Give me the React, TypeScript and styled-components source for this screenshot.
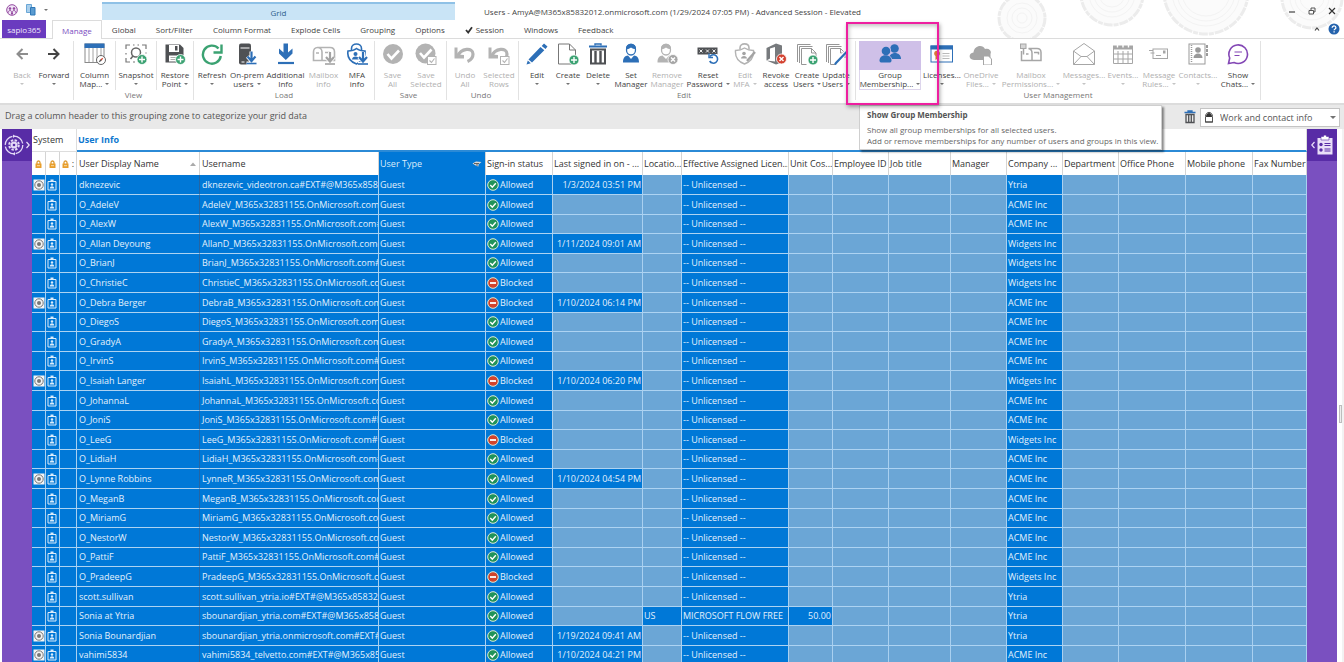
import React from "react";
import styled, { createGlobalStyle, css } from "styled-components";

const Global = createGlobalStyle`
  * { box-sizing: border-box; }
  html, body { margin: 0; height: 100%; background: #fff; }
  body, button, select, table {
    font-family: "Open Sans", "Noto Sans", sans-serif;
    font-size: 9px;
    color: #444;
  }
  button { border: 0; background: none; padding: 0; margin: 0; cursor: default; }
  svg { display: block; flex: none; }
`;

const GRAY = "#b3b3b3";
const DARK = "#4f5154";
const BLUE = "#2d6fb7";
const GREEN = "#3ba272";
const PURPLE = "#8347b5";

/* ---------- window frame ---------- */

const Window = styled.div`
  display: flex;
  flex-direction: column;
  height: 100vh;
  overflow: hidden;
  background: #fff;
`;

const Head = styled.header`
  position: relative;
  z-index: 2;
  flex: none;
`;

const Rings = styled.svg`
  position: absolute;
  top: 0;
  right: 0;
`;

const TitleBar = styled.div`
  display: flex;
  height: 20px;
  padding: 2px 8px 0 0;
`;

const QuickAccess = styled.div`
  display: flex;
  align-items: center;
  gap: 8px;
  width: 102px;
  padding: 0 0 2px 6px;
`;

const ContextTab = styled.div`
  width: 353px;
  border-top: 2px solid #8fc1e6;
  background: #c9e4f6;
  color: #2d5f8c;
  font-size: 8px;
  line-height: 18px;
  text-align: center;
`;

const Title = styled.h1`
  flex: 1;
  margin: 0;
  padding-left: 29px;
  font-size: 8px;
  font-weight: 400;
  line-height: 19px;
  white-space: nowrap;
`;

const WindowButtons = styled.div`
  position: relative;
  display: flex;
  align-items: center;
  gap: 12px;
`;

const TabBar = styled.nav`
  position: relative;
  display: flex;
  height: 19px;
  padding: 0 4px 0 2px;
  border-bottom: 1px solid #dcdcdc;
`;

const AppTab = styled.button`
  width: 44px;
  height: 18px;
  margin-right: 6px;
  background: #6a3bbf;
  color: #f0e9fb;
  font-size: 8px;
`;

const Tab = styled.button<{ $active?: boolean }>`
  display: flex;
  align-items: center;
  gap: 3px;
  height: 19px;
  padding: 0 10px;
  font-size: 8px;
  white-space: nowrap;
  ${(p) =>
    p.$active &&
    css`
      padding: 0 9px;
      border: 1px solid #dcdcdc;
      border-bottom: 0;
      background: #fff;
      color: #7a4bc0;
    `}
`;

const TabEnd = styled.div`
  display: flex;
  align-items: center;
  gap: 8px;
  margin-left: auto;
`;

/* ---------- ribbon ---------- */

const Ribbon = styled.div`
  display: flex;
  height: 66px;
  padding: 2px 0 3px 6px;
  border-bottom: 2px solid #dcdcdc;
`;

const Group = styled.section<{ $pad?: number; $lead?: number }>`
  display: flex;
  flex-direction: column;
  padding: 0 ${(p) => p.$pad ?? 0}px 0 ${(p) => p.$lead ?? 0}px;
  border-right: 1px solid #e2e2e2;
`;

const Tools = styled.div`
  display: flex;
  height: 49px;
`;

const GroupName = styled.div`
  color: #777;
  font-size: 8px;
  line-height: 10px;
  text-align: center;
`;

const Divider = styled.div`
  width: 1px;
  background: #e2e2e2;
`;

const ToolButton = styled.button<{ $w: number; $off?: boolean; $hot?: boolean }>`
  display: flex;
  flex-direction: column;
  align-items: center;
  width: ${(p) => p.$w}px;
  height: 49px;
  color: ${(p) => (p.$off ? "#b0b0b0" : "#444")};
  font-size: 8px;
  ${(p) => p.$hot && css`box-shadow: inset 0 0 0 1px #ddd5ec;`}
`;

const IconBox = styled.span<{ $hot?: boolean }>`
  display: flex;
  align-items: center;
  justify-content: center;
  align-self: stretch;
  height: 29px;
  padding-bottom: 3px;
  background: ${(p) => (p.$hot ? "#cfc0e8" : "transparent")};
`;

const Line = styled.span`
  display: flex;
  align-items: center;
  justify-content: center;
  gap: 3px;
  height: 9px;
  line-height: 9px;
  white-space: nowrap;
`;

const Caret = styled.i`
  border: 2px solid transparent;
  border-top-color: currentColor;
  border-bottom: 0;
  opacity: 0.75;
`;

const HotSpot = styled.div`
  position: relative;
`;

const Highlight = styled.div`
  position: absolute;
  z-index: 3;
  top: -19px;
  right: -18px;
  bottom: -15px;
  left: -13px;
  border: 2px solid #ee1fa0;
  box-shadow: 1px 2px 4px rgba(0, 0, 0, 0.35), inset 1px 2px 4px rgba(0, 0, 0, 0.25);
  pointer-events: none;
`;

const Tooltip = styled.div`
  position: absolute;
  z-index: 2;
  top: 64px;
  left: 0;
  width: 303px;
  height: 45px;
  padding: 3px 7px;
  border: 1px solid #cfcfcf;
  background: #fff;
  box-shadow: 2px 2px 2px rgba(0, 0, 0, 0.45);
  color: #666;
  font-size: 8px;
  line-height: 11px;
  white-space: nowrap;
`;

const TipTitle = styled.strong`
  display: block;
  margin-bottom: 3px;
  color: #555;
  font-size: 8px;
  line-height: 12px;
`;

/* ---------- grouping zone ---------- */

const Zone = styled.div`
  display: flex;
  flex: none;
  align-items: center;
  gap: 4px;
  height: 24px;
  padding: 0 4px 0 5px;
  background: #e9e9e9;
`;

const ZoneText = styled.p`
  flex: 1;
  margin: 0 0 2px;
  color: #555;
  font-size: 9px;
  line-height: 20px;
`;

const ViewPicker = styled.label`
  position: relative;
  display: flex;
  align-items: center;
  width: 140px;
  height: 19px;
  padding-left: 3px;
  border: 1px solid #c4c4c4;
  background: #fff;
`;

const Select = styled.select`
  flex: 1;
  height: 17px;
  padding: 0 0 0 6px;
  border: 0;
  appearance: none;
  background: transparent;
  color: #555;
  font-size: 9px;
`;

const PickerCaret = styled(Caret)`
  margin-right: 3px;
  border-width: 3px 3px 0;
`;

/* ---------- body ---------- */

const Body = styled.main`
  display: flex;
  flex: 1;
  min-height: 0;
  padding-left: 2px;
`;

const Rail = styled.aside`
  flex: none;
  width: 30px;
  background: #7a50c0;
`;

const RailButton = styled.button`
  display: flex;
  align-items: center;
  justify-content: center;
  gap: 2px;
  width: 100%;
  height: 32px;
  background: #582ca6;
`;

const Gutter = styled.div`
  display: flex;
  flex: none;
  align-items: center;
  width: 7px;
  padding-top: 36px;
  margin-left: auto;
  border-right: 2px solid #f2f2f2;
  background: #fff;
`;

const GutterGrip = styled.div`
  width: 5px;
  height: 18px;
  margin-left: 2px;
  border: 1px solid #bdbdbd;
  background: #eee;
`;

const GridArea = styled.div`
  flex: 1;
  min-width: 0;
  overflow: hidden;
`;

const Table = styled.table`
  width: 100%;
  table-layout: fixed;
  border-collapse: separate;
  border-spacing: 0;
`;

const Band = styled.th<{ $main?: boolean }>`
  height: 23px;
  padding: 0 1px 1px;
  border-bottom: ${(p) => (p.$main ? "2px solid #2b8ad6" : "1px solid #ddd")};
  border-right: 1px solid #ddd;
  color: ${(p) => (p.$main ? "#0f78cf" : "#333")};
  font-size: 9px;
  font-weight: ${(p) => (p.$main ? 700 : 400)};
  text-align: left;
`;

const HeadCell = styled.th<{ $on?: boolean; $tight?: boolean; $wide?: boolean }>`
  height: 23px;
  padding: 0 0 0 ${(p) => (p.$tight ? 0 : p.$wide ? 2 : 1)}px;
  border-right: 1px solid #d4d4d4;
  background: ${(p) => (p.$on ? "#0078d7" : "#fff")};
  color: ${(p) => (p.$on ? "#dcecfa" : "#333")};
  font-weight: 400;
  line-height: 20px;
  text-align: left;
  white-space: nowrap;
  overflow: hidden;
`;

const HeadInner = styled.div`
  display: flex;
  align-items: center;
  justify-content: space-between;
  padding-right: 3px;
`;

const LockInner = styled.div`
  display: flex;
  align-items: center;
  justify-content: center;
  gap: 3px;
`;

const Row = styled.tr`
  height: 20px;
  &:nth-child(5n + 3), &:nth-child(5n) { height: 19px; }
`;

const Cell = styled.td<{ $empty?: boolean; $right?: boolean; $dark?: boolean; $wide?: boolean }>`
  padding: 0 1px 0 ${(p) => (p.$wide ? 2 : 1)}px;
  border-right: 1px solid ${(p) => (p.$dark ? "#2465a4" : "#a9d0f0")};
  border-bottom: 1px solid #add3f2;
  background: ${(p) => (p.$empty ? "#6ba6d6" : "#0078d7")};
  color: #e3f0fc;
  line-height: 18px;
  text-align: ${(p) => (p.$right ? "right" : "left")};
  white-space: nowrap;
  overflow: hidden;
`;

const Status = styled.span`
  display: flex;
  align-items: center;
  gap: 1px;
`;

/* ---------- icons ---------- */

type DrawProps = { w?: number; h?: number; children: React.ReactNode };
const Draw = ({ w = 22, h = 22, children }: DrawProps) => (
  <svg width={w} height={h} viewBox={`0 0 ${w} ${h}`} fill="none" aria-hidden="true">
    {children}
  </svg>
);

const Plus = ({ x, y }: { x: number; y: number }) => (
  <g>
    <circle cx={x} cy={y} r="5" fill={GREEN} stroke="#fff" strokeWidth="0.8" />
    <path d={`M${x - 3} ${y}h6M${x} ${y - 3}v6`} stroke="#fff" strokeWidth="1.4" />
  </g>
);

const Cross = ({ x, y, c }: { x: number; y: number; c: string }) => (
  <g>
    <circle cx={x} cy={y} r="5" fill={c} stroke="#fff" strokeWidth="0.8" />
    <path d={`M${x - 2} ${y - 2}l4 4m0-4l-4 4`} stroke="#fff" strokeWidth="1.4" />
  </g>
);

const DownArrow = ({ x, y, c }: { x: number; y: number; c: string }) => (
  <g>
    <path d={`M${x} ${y}v9M${x - 4} ${y + 5}l4 4.5l4-4.5M${x - 5} ${y + 12}h10`} stroke="#fff" strokeWidth="4" />
    <path d={`M${x} ${y}v9M${x - 4} ${y + 5}l4 4.5l4-4.5`} stroke={c} strokeWidth="2.2" />
    <path d={`M${x - 5} ${y + 12}h10`} stroke={c} strokeWidth="1.6" />
  </g>
);

const TickBox = () => (
  <g>
    <rect x="12.5" y="13.5" width="8.5" height="8" fill="#fff" stroke={GRAY} />
    <path d="M14.5 17.5l2 2l3-4" stroke={GRAY} strokeWidth="1.1" />
  </g>
);

const Pages = () => (
  <g stroke="#8a8a8a" strokeWidth="0.9">
    <path d="M1.5 19V1.5h13" />
    <path d="M3.5 20V3.5h13" />
    <path d="M5.500 21.500V5.500h10l4.500 4.500v11.500z" fill="#fff" stroke="none" />
    <path d="M5.500 21.500V5.500h10l4.500 4.500v5M5.500 21.500h5" />
    <path d="M15.500 5.500v4.500h4.500" />
  </g>
);

const UndoArrow = () => (
  <g>
    <path d="M3.500 13.500C7 5 19 4 19 11c0 3.500-2 6-5.500 7.500" stroke={GRAY} strokeWidth="3.200" />
    <path d="M0.500 4.500h3v7l6.500 0.500v3.500H0.500z" fill={GRAY} />
  </g>
);

const icons: Record<string, React.ReactNode> = {
  back: <Draw w={14} h={14}><path d="M13 7H2.500M7.500 2L2.500 7l5 5" stroke="#8d8d8d" strokeWidth="2" /></Draw>,
  forward: <Draw w={14} h={14}><path d="M1 7h10.500M6.500 2l5 5l-5 5" stroke="#444" strokeWidth="2" /></Draw>,
  columns: (
    <Draw>
      <rect x="1" y="1" width="19" height="18.500" fill="#fff" stroke="#8a8a8a" />
      <path d="M0.500 0.500h20v4.500h-20z" fill={BLUE} />
      <path d="M5 5v14M9 5v14M13 5v14M17 5v14" stroke="#8a8a8a" strokeWidth="0.8" />
      <circle cx="17" cy="17" r="4.500" fill="#fff" stroke="#666" />
      <path d="M19.500 14.500l-1.800 3.200l-1.400-1.400z" fill="#d0402c" />
      <path d="M14.500 19.500l1.800-3.200l1.400 1.400z" fill="#555" />
    </Draw>
  ),
  snapshot: (
    <Draw>
      <path d="M1 6V2h4M17 2h4v4M1 15v4h4M8 2h1.500M12.500 2H14M1 10v1.500M21 9.500v1M8 19h2" stroke="#777" strokeWidth="1.200" />
      <circle cx="11" cy="9.500" r="4.500" stroke="#666" strokeWidth="1.500" />
      <path d="M8 13l-2.500 3" stroke="#666" strokeWidth="1.500" />
      <Plus x={17} y={16.500} />
    </Draw>
  ),
  restore: (
    <Draw>
      <path d="M1.500 1.500h14.500l3.500 3.500v14.500h-18z" fill={DARK} />
      <path d="M5 2h10v7H5zM5 12.500h10.500v6H5z" fill="#fff" />
      <path d="M11 3h2.500v4.500H11z" fill={DARK} />
      <path d="M6.500 14.500h7M6.500 16.500h5" stroke="#999" strokeWidth="0.8" />
      <Plus x={16.500} y={16.500} />
    </Draw>
  ),
  refresh: (
    <Draw>
      <path d="M17.500 5.500A9 9 0 1 0 19.800 13" stroke={GREEN} strokeWidth="2.400" />
      <path d="M20.500 1.500v8h-8" stroke={GREEN} strokeWidth="2.400" />
    </Draw>
  ),
  onprem: (
    <Draw>
      <rect x="3" y="0.500" width="12" height="21" rx="2" fill={DARK} />
      <path d="M4.500 5h9" stroke="#fff" />
      <path d="M5.500 19h3" stroke="#fff" />
      <DownArrow x={15.500} y={8.500} c={BLUE} />
    </Draw>
  ),
  additional: (
    <Draw>
      <path d="M8.500 0.500h4.500v9l4.500-4v5l-6.700 6.500L4 10.500v-5l4.500 4z" fill={BLUE} />
      <path d="M3 20h16" stroke={BLUE} strokeWidth="2.200" />
    </Draw>
  ),
  mailbox: (
    <Draw w={24}>
      <path d="M5.500 4.500h12.500c3 0 4.500 2 4.500 4.500v8.500h-21V9c0-2.500 1.500-4.500 4-4.500s4.500 2 4.500 4.500v8.500" stroke={GRAY} strokeWidth="1.600" />
      <path d="M4 10h3M13 9.500h5" stroke={GRAY} strokeWidth="1.600" />
      <DownArrow x={18} y={9} c="#a3a3a3" />
    </Draw>
  ),
  mfa: (
    <Draw>
      <path d="M5.500 7V5.500c0-6 10-6 10 0V7" stroke={BLUE} strokeWidth="1.600" />
      <path d="M10.500 5.500c-2.500 2-5 2.500-8.500 2.500c-1 6 1.500 10.500 8.500 13c6-2.500 9-6.500 8.500-13c-3 0-6-0.500-8.500-2.500z" fill="#fff" stroke={BLUE} strokeWidth="1.600" />
      <circle cx="9.500" cy="11" r="2" fill={BLUE} />
      <path d="M6 16.500c0-4 7-4 7 0z" fill={BLUE} />
      <DownArrow x={17} y={9} c={BLUE} />
    </Draw>
  ),
  saveAll: (
    <Draw>
      <circle cx="11" cy="11" r="10" fill={GRAY} />
      <path d="M5.500 11l4 4.500l7.500-8" stroke="#fff" strokeWidth="2.600" />
    </Draw>
  ),
  saveSelected: (
    <Draw>
      <circle cx="10.500" cy="10.500" r="10" fill={GRAY} />
      <path d="M5 10l4 4.500l7.500-8" stroke="#fff" strokeWidth="2.600" />
      <TickBox />
    </Draw>
  ),
  undoAll: <Draw><UndoArrow /></Draw>,
  undoRows: <Draw><UndoArrow /><TickBox /></Draw>,
  edit: (
    <Draw>
      <path d="M18 0.500l3.500 3l-2 2.500l-3.800-3zM14.500 4l3.800 3.200L6 19.500l-3.500-3zM1.800 17.500l3 2.700L0.500 21.500z" fill={BLUE} />
    </Draw>
  ),
  create: (
    <Draw w={24}>
      <path d="M2.500 1h11l6 6v14h-17z" stroke="#777" />
      <path d="M13.500 1v6h6" stroke="#777" />
      <Plus x={18} y={17} />
    </Draw>
  ),
  remove: (
    <Draw>
      <path d="M2 3.500h18" stroke={BLUE} strokeWidth="2" />
      <path d="M8 2.500V1h6v1.500" stroke={BLUE} strokeWidth="1.400" />
      <path d="M4 6.500h14v14H4z" stroke={DARK} strokeWidth="2" />
      <path d="M8.500 8v12M13.500 8v12" stroke={DARK} strokeWidth="2.400" />
    </Draw>
  ),
  setManager: (
    <Draw>
      <path d="M6.500 7c-1-7.500 10-7.500 9 0c0 3-2 5-4.500 5S6.500 10 6.500 7z" fill="#fff" stroke={BLUE} strokeWidth="1.300" />
      <path d="M6 6c2 0.500 4-0.500 5-1.500c1.500 1.500 3 1.500 5 1.500c0-7-10-7-10 0z" fill={BLUE} />
      <path d="M3 19.500c0-5 2-6.500 5-7l3 3.500l3-3.500c3 0.500 5 2 5 7z" fill={BLUE} />
    </Draw>
  ),
  removeManager: (
    <Draw>
      <path d="M5.500 7c-1-7.500 10-7.500 9 0c0 3-2 5-4.500 5S5.500 10 5.500 7z" fill="#fff" stroke={GRAY} strokeWidth="1.300" />
      <path d="M5 6c2 0.500 4-0.500 5-1.500c1.500 1.500 3 1.500 5 1.500c0-7-10-7-10 0z" fill={GRAY} />
      <path d="M1.500 19.500c0-5 2-6.500 5-7l3.500 3.500l3-3.500c3 0.500 5 2 5 7z" fill={GRAY} />
      <Cross x={17} y={16.500} c="#a6a6a6" />
    </Draw>
  ),
  password: (
    <Draw>
      <path d="M0.500 4.500h20v7h-20z" fill={DARK} />
      <path d="M2.500 6.500l3 3m0-3l-3 3M9 6.500l3 3m0-3l-3 3M15.500 6.500l3 3m0-3l-3 3" stroke="#fff" strokeWidth="0.900" />
      <path d="M11.500 11h9v10h-9z" fill="#fff" />
      <path d="M13 13.500a4.200 4.200 0 1 1-0.300 4.500" stroke={BLUE} strokeWidth="1.600" />
      <path d="M12 10.500v4h4" stroke={BLUE} strokeWidth="1.400" />
    </Draw>
  ),
  editMfa: (
    <Draw>
      <path d="M6 6.500V5c0-5.500 9-5.500 9 0v1.500" stroke={GRAY} strokeWidth="1.600" />
      <path d="M10.500 5c-2.500 1.700-5 2.500-9 2.500c-0.500 6 2 11 9 13.500c7-2.500 9.500-7.500 9-13.500c-4 0-6.500-0.800-9-2.500z" fill="#fff" stroke={GRAY} strokeWidth="1.400" />
      <circle cx="10" cy="10.500" r="1.800" fill="#a3a3a3" />
      <path d="M7 15.500c0-3.500 6-3.500 6 0z" fill="#a3a3a3" />
      <path d="M21 9l-8 9" stroke="#a3a3a3" strokeWidth="2.400" />
    </Draw>
  ),
  revoke: (
    <Draw>
      <path d="M1.500 5L11 0.500l6 2v17L11 21.500L1.500 17.500l8.500 1V4L5 5.500v10l-3.500 2z" fill="#777a7d" />
      <Cross x={16.500} y={16} c="#d34230" />
    </Draw>
  ),
  createUsers: <Draw><Pages /><Plus x={17} y={17} /></Draw>,
  updateUsers: (
    <Draw>
      <Pages />
      <path d="M21 9L10.500 20" stroke="#fff" strokeWidth="4" />
      <path d="M21.500 9L11 20l-1 1.500" stroke={BLUE} strokeWidth="2.200" />
    </Draw>
  ),
  group: (
    <Draw>
      <circle cx="15.500" cy="5.500" r="4.300" fill={BLUE} />
      <path d="M10 16c0-8 12-8 12 0z" fill={BLUE} />
      <circle cx="7" cy="7.500" r="5" fill="#cfc0e8" />
      <path d="M0 20c-1-11 14.500-11 13.500 0z" fill="#cfc0e8" />
      <circle cx="7" cy="8" r="4.300" fill={BLUE} />
      <path d="M0.500 17.500c0-7 12-7 12 0c0 1.500-1 2-2 2h-8c-1 0-2-0.500-2-2z" fill={BLUE} />
    </Draw>
  ),
  licenses: (
    <Draw w={24}>
      <rect x="1" y="3" width="21.500" height="16" fill="#fff" stroke={BLUE} />
      <path d="M0.500 2.500h22.500v4H0.500z" fill={BLUE} />
      <circle cx="7" cy="10.500" r="2.800" fill="#e07b39" />
      <path d="M5.500 12.500h3V17l-1.500-1l-1.500 1z" fill="#e07b39" />
      <path d="M12.500 10.500h7M12.500 13h7M12.500 15.500h7" stroke="#bbb" />
    </Draw>
  ),
  onedrive: (
    <Draw w={24}>
      <path d="M5 17c-6-0.500-5.500-7-0.500-7.500C5 2 14 1 16 6c4-1.500 7 2 5.500 5v6z" fill="#a6a6a6" />
      <path d="M14.500 13h5l3 3v6h-8z" fill="#fff" stroke="#a6a6a6" />
    </Draw>
  ),
  mailPerm: (
    <Draw w={24}>
      <path d="M2.500 8v9.500h19.500V9.500c0-2.500-1.500-4-4-4H9.500c2.500 0.500 3.500 2 3.500 4.500v7.500" stroke="#a6a6a6" strokeWidth="1.500" />
      <rect x="1.500" y="1" width="5.500" height="4.500" fill="#d5d5d5" stroke="#a6a6a6" />
      <path d="M4.500 5.500v6M7 11h2.500M15 9.500h4.500v2" stroke="#a6a6a6" strokeWidth="1.500" />
    </Draw>
  ),
  messages: (
    <Draw>
      <path d="M0.500 8L11 0.500L21.500 8v13.500H0.500zL8 13.500h6L21.500 8M0.500 21.500L8 13.500M21.500 21.500L14 13.500" stroke="#a6a6a6" />
    </Draw>
  ),
  events: (
    <Draw>
      <path d="M1 2.500h20v4H1z" fill="#a6a6a6" />
      <path d="M5.500 0.500v4M11 0.500v4M16.500 0.500v4" stroke="#fff" strokeWidth="1.400" />
      <path d="M1.500 6v14.500h19V6M1.500 11h19M1.500 16h19M6 8v13M11 8v13M16 8v13" stroke="#a6a6a6" />
    </Draw>
  ),
  rules: (
    <Draw>
      <rect x="5" y="6" width="14.500" height="9.500" stroke="#a6a6a6" />
      <path d="M1 7.500h4M2.500 10h4M8 12.500h5" stroke="#a6a6a6" />
      <path d="M15 7.500h2.500v3H15z" fill="#a6a6a6" />
    </Draw>
  ),
  contacts: (
    <Draw>
      <rect x="2" y="1" width="16" height="20" stroke="#9a9a9a" />
      <path d="M4.500 2v18" stroke="#9a9a9a" strokeWidth="1.500" strokeDasharray="1 1" />
      <circle cx="11" cy="7" r="2.800" fill="#9a9a9a" />
      <path d="M6.500 15c0-6 9-6 9 0z" fill="#9a9a9a" />
      <path d="M20 2v3M20 6v3M20 10v3" stroke="#9a9a9a" strokeWidth="2" />
    </Draw>
  ),
  chats: (
    <Draw>
      <path d="M1.500 20.500l1.200-5.500a9.300 9.300 0 1 1 4.300 4.500z" stroke={PURPLE} strokeWidth="1.600" />
      <path d="M7.500 9h7.500M7.500 12.500h5" stroke={PURPLE} strokeWidth="1.200" />
    </Draw>
  ),
};

const Logo = () => (
  <Draw w={12} h={12}>
    <circle cx="6" cy="6" r="5.300" fill="#f1e6f7" stroke="#93489f" />
    <circle cx="4" cy="4.500" r="1.300" fill="#93489f" />
    <circle cx="8" cy="4.500" r="1.300" fill="#93489f" />
    <path d="M2.500 8.500c0-3 3-3 3 0v2M6.500 10.500v-2c0-3 3-3 3 0" stroke="#93489f" />
  </Draw>
);

const CopyIcon = () => (
  <Draw w={10} h={12}>
    <path d="M0.500 0.500h5v8h-5z" fill="#a9cfec" stroke="#6aa7d6" />
    <path d="M4.500 3.500h4.500v7.500H4.500z" fill="#5a9bd0" stroke="#2f78b8" />
  </Draw>
);

const Lock = () => (
  <Draw w={7} h={8}>
    <path d="M2 4V2.500c0-2 3-2 3 0V4" stroke="#dd9a30" strokeWidth="1.300" />
    <path d="M0.500 3.500h6v4.500h-6z" fill="#e89e2c" />
    <path d="M2 5.700h3" stroke="#f7dca8" />
  </Draw>
);

const Target = () => (
  <Draw w={12} h={12}>
    <path d="M0.500 0.500h11v11h-11z" fill="#f3f3f3" />
    <circle cx="6" cy="6" r="4.200" stroke="#777" />
    <circle cx="6" cy="6" r="2" fill="#777" />
  </Draw>
);

const Badge = () => (
  <Draw w={10} h={12}>
    <path d="M1 2.500h8v8.500H1z" stroke="#dcecfa" />
    <path d="M3.500 0.500h3v2.500h-3z" fill="#dcecfa" />
    <circle cx="5" cy="5.500" r="1.200" fill="#dcecfa" />
    <path d="M2.800 9.500c0-3 4.400-3 4.400 0z" fill="#dcecfa" />
  </Draw>
);

const StatusIcon = ({ ok }: { ok: boolean }) => (
  <Draw w={12} h={12}>
    <circle cx="6" cy="6" r="5.300" fill={ok ? "#21935a" : "#d2442c"} stroke="#dcecd8" />
    {ok ? (
      <path d="M3.300 6l2 2.200l3.500-4" stroke="#fff" strokeWidth="1.400" />
    ) : (
      <path d="M3 6h6" stroke="#fff" strokeWidth="1.800" />
    )}
  </Draw>
);

const Gear = () => (
  <Draw w={20} h={22}>
    <circle cx="10" cy="11" r="8.800" stroke="#e4d9f7" strokeWidth="1.300" strokeDasharray="12 1.800" />
    <circle cx="10" cy="11" r="4.800" stroke="#e4d9f7" strokeWidth="2" strokeDasharray="2.400 1.370" />
    <circle cx="10" cy="11" r="3.500" fill="#e4d9f7" />
    <circle cx="10" cy="11" r="1.300" fill="#582ca6" />
    <path d="M9 0.500l2.500 1.700L9 4M11 18l-2.500 1.700L11 21.500" fill="#e4d9f7" />
  </Draw>
);

const Clipboard = () => (
  <Draw w={16} h={20}>
    <path d="M0.500 3h15v16.500h-15z" fill="#e9dff8" />
    <path d="M4 1.500h2.500c0-2 3-2 3 0H12V5H4z" fill="#fff" stroke="#582ca6" strokeWidth="0.600" />
    <circle cx="4" cy="9.500" r="1.700" fill="#582ca6" />
    <circle cx="4" cy="15" r="1.700" fill="#582ca6" />
    <path d="M7.500 8.500h6M7.500 10.500h6M7.500 14h6M7.500 16h6" stroke="#582ca6" />
  </Draw>
);

const Chevron = ({ left }: { left?: boolean }) => (
  <Draw w={4} h={8}>
    <path d={left ? "M3.500 1L0.800 4l2.700 3" : "M0.500 1l2.700 3l-2.700 3"} stroke="#e9dff8" strokeWidth="1.200" />
  </Draw>
);

/* ---------- ribbon content ---------- */

type ToolProps = { icon: string; w: number; a: string; b?: string; drop?: boolean; off?: boolean; hot?: boolean };

const Tool = ({ icon, w, a, b, drop, off, hot }: ToolProps) => (
  <ToolButton $w={w} $off={off} $hot={hot} disabled={off}>
    <IconBox $hot={hot}>{icons[icon]}</IconBox>
    <Line>{a}</Line>
    <Line>
      {b}
      {drop && <Caret />}
    </Line>
  </ToolButton>
);

const tabs = ["Global", "Sort/Filter", "Column Format", "Explode Cells", "Grouping", "Options", "Session", "Windows", "Feedback"];

/* ---------- grid content ---------- */

const widths = [14, 14, 17, 123, 179, 107, 67, 90, 39, 107, 44, 56, 62, 56, 56, 56, 67, 67];

const headings = [
  "Sign-in status", "Last signed in on - ...", "Locatio...", "Effective Assigned Licen...", "Unit Cos...",
  "Employee ID", "Job title", "Manager", "Company ...", "Department", "Office Phone", "Mobile phone", "Fax Number",
];

type User = { name: string; mail: string; org: string; seen?: string; blocked?: boolean; where?: string; plan?: string; cost?: string };

const users: User[] = [
  { name: "dknezevic", mail: "dknezevic_videotron.ca#EXT#@M365x8583", org: "Ytria", seen: "1/3/2024 03:51 PM" },
  { name: "O_AdeleV", mail: "AdeleV_M365x32831155.OnMicrosoft.com#", org: "ACME Inc" },
  { name: "O_AlexW", mail: "AlexW_M365x32831155.OnMicrosoft.com#E", org: "ACME Inc" },
  { name: "O_Allan Deyoung", mail: "AllanD_M365x32831155.OnMicrosoft.com#", org: "Widgets Inc", seen: "1/11/2024 09:01 AM" },
  { name: "O_BrianJ", mail: "BrianJ_M365x32831155.OnMicrosoft.com#E", org: "Widgets Inc" },
  { name: "O_ChristieC", mail: "ChristieC_M365x32831155.OnMicrosoft.com", org: "Widgets Inc", blocked: true },
  { name: "O_Debra Berger", mail: "DebraB_M365x32831155.OnMicrosoft.com#", org: "ACME Inc", seen: "1/10/2024 06:14 PM", blocked: true },
  { name: "O_DiegoS", mail: "DiegoS_M365x32831155.OnMicrosoft.com#", org: "ACME Inc" },
  { name: "O_GradyA", mail: "GradyA_M365x32831155.OnMicrosoft.com#", org: "ACME Inc" },
  { name: "O_IrvinS", mail: "IrvinS_M365x32831155.OnMicrosoft.com#E", org: "ACME Inc" },
  { name: "O_Isaiah Langer", mail: "IsaiahL_M365x32831155.OnMicrosoft.com#", org: "Widgets Inc", seen: "1/10/2024 06:20 PM", blocked: true },
  { name: "O_JohannaL", mail: "JohannaL_M365x32831155.OnMicrosoft.com", org: "ACME Inc" },
  { name: "O_JoniS", mail: "JoniS_M365x32831155.OnMicrosoft.com#E", org: "ACME Inc" },
  { name: "O_LeeG", mail: "LeeG_M365x32831155.OnMicrosoft.com#EX", org: "Widgets Inc", blocked: true },
  { name: "O_LidiaH", mail: "LidiaH_M365x32831155.OnMicrosoft.com#E", org: "ACME Inc" },
  { name: "O_Lynne Robbins", mail: "LynneR_M365x32831155.OnMicrosoft.com#", org: "ACME Inc", seen: "1/10/2024 04:54 PM" },
  { name: "O_MeganB", mail: "MeganB_M365x32831155.OnMicrosoft.com", org: "ACME Inc" },
  { name: "O_MiriamG", mail: "MiriamG_M365x32831155.OnMicrosoft.com", org: "ACME Inc" },
  { name: "O_NestorW", mail: "NestorW_M365x32831155.OnMicrosoft.com", org: "ACME Inc" },
  { name: "O_PattiF", mail: "PattiF_M365x32831155.OnMicrosoft.com#E", org: "ACME Inc" },
  { name: "O_PradeepG", mail: "PradeepG_M365x32831155.OnMicrosoft.co", org: "Widgets Inc", blocked: true },
  { name: "scott.sullivan", mail: "scott.sullivan_ytria.io#EXT#@M365x858320", org: "Ytria" },
  { name: "Sonia at Ytria", mail: "sbounardjian_ytria.com#EXT#@M365x8583", org: "Ytria", where: "US", plan: "MICROSOFT FLOW FREE", cost: "50.00" },
  { name: "Sonia Bounardjian", mail: "sbounardjian_ytria.onmicrosoft.com#EXT#@", org: "Ytria", seen: "1/19/2024 09:41 AM" },
  { name: "vahimi5834", mail: "vahimi5834_telvetto.com#EXT#@M365x858", org: "ACME Inc", seen: "1/10/2024 04:21 PM" },
];

const UserRow = ({ u }: { u: User }) => (
  <Row>
    <Cell>{u.seen && <Target />}</Cell>
    <Cell><Badge /></Cell>
    <Cell />
    <Cell $wide $dark>{u.name}</Cell>
    <Cell $wide>{u.mail}</Cell>
    <Cell>Guest</Cell>
    <Cell>
      <Status>
        <StatusIcon ok={!u.blocked} />
        {u.blocked ? "Blocked" : "Allowed"}
      </Status>
    </Cell>
    <Cell $right $empty={!u.seen}>{u.seen}</Cell>
    <Cell $empty={!u.where}>{u.where}</Cell>
    <Cell>{u.plan ?? "-- Unlicensed --"}</Cell>
    <Cell $right $empty={!u.cost}>{u.cost}</Cell>
    <Cell $empty />
    <Cell $empty />
    <Cell $empty />
    <Cell>{u.org}</Cell>
    <Cell $empty />
    <Cell $empty />
    <Cell $empty />
    <Cell $empty />
  </Row>
);

const rings: [number, number, number][] = [
  [28, 18, 23],
  [118, -6, 31],
  [212, -8, 42],
  [318, -2, 30],
];

export default function App() {
  return (
    <Window>
      <Global />
      <Head>
        <Rings width="350" height="38" viewBox="0 0 350 38" fill="none" aria-hidden="true">
          {rings.map(([x, y, r]) => (
            <g key={x} stroke="#f3f3f3">
              <circle cx={x} cy={y} r={r} fill="#fbfbfb" stroke="#ececec" strokeWidth="3" strokeDasharray="9 1 5 1" />
              <circle cx={x} cy={y} r={r - 8} />
              <circle cx={x} cy={y} r={r - 13} />
              <circle cx={x} cy={y} r={r - 18} />
            </g>
          ))}
        </Rings>
        <TitleBar>
          <QuickAccess>
            <Logo />
            <CopyIcon />
            <Caret />
          </QuickAccess>
          <ContextTab>Grid</ContextTab>
          <Title>Users - AmyA@M365x85832012.onmicrosoft.com (1/29/2024 07:05 PM) - Advanced Session - Elevated</Title>
          <WindowButtons>
            <button aria-label="Minimize"><Draw w={8} h={8}><path d="M1 5h6" stroke="#444" strokeWidth="1.200" /></Draw></button>
            <button aria-label="Restore"><Draw w={8} h={8}><path d="M1 3.500h4.500V7H1zM3 3V1h4v4H6" stroke="#444" strokeWidth="0.900" /></Draw></button>
            <button aria-label="Close"><Draw w={8} h={8}><path d="M1 1l6 6M7 1L1 7" stroke="#333" strokeWidth="1.200" /></Draw></button>
          </WindowButtons>
        </TitleBar>
        <TabBar>
          <AppTab>sapio365</AppTab>
          <Tab $active>Manage</Tab>
          {tabs.map((t) => (
            <Tab key={t}>
              {t === "Session" && <Draw w={8} h={8}><path d="M1 4l2.200 2.500L7 1.200" stroke="#333" strokeWidth="1.800" /></Draw>}
              {t}
            </Tab>
          ))}
          <TabEnd>
            <button aria-label="Collapse ribbon"><Draw w={6} h={6}><path d="M1 4.500l2-2.500l2 2.500" stroke="#444" strokeWidth="1.200" /></Draw></button>
            <button aria-label="Help">
              <Draw w={12} h={12}>
                <circle cx="6" cy="6" r="5.500" fill="#2563ad" />
                <path d="M4.200 4.700c0-2.400 3.700-2.200 3.700 0c0 1.300-1.800 1.200-1.800 2.600M6.100 8.200v1.400" stroke="#fff" strokeWidth="1.300" />
              </Draw>
            </button>
          </TabEnd>
        </TabBar>
        <Ribbon>
          <Group $pad={3}>
            <Tools>
              <Tool icon="back" w={32} a="Back" drop off />
              <Tool icon="forward" w={32} a="Forward" drop />
            </Tools>
          </Group>
          <Group>
            <Tools>
              <Tool icon="columns" w={41} a="Column" b="Map..." drop />
              <Divider />
              <Tool icon="snapshot" w={40} a="Snapshot" drop />
              <Divider />
              <Tool icon="restore" w={36} a="Restore" b="Point" drop />
            </Tools>
            <GroupName>View</GroupName>
          </Group>
          <Group>
            <Tools>
              <Tool icon="refresh" w={36} a="Refresh" drop />
              <Tool icon="onprem" w={34} a="On-prem" b="users" drop />
              <Tool icon="additional" w={43} a="Additional" b="Info" />
              <Tool icon="mailbox" w={33} a="Mailbox" b="info" off />
              <Tool icon="mfa" w={34} a="MFA" b="info" />
            </Tools>
            <GroupName>Load</GroupName>
          </Group>
          <Group $pad={4}>
            <Tools>
              <Tool icon="saveAll" w={35} a="Save" b="All" off />
              <Tool icon="saveSelected" w={32} a="Save" b="Selected" off />
            </Tools>
            <GroupName>Save</GroupName>
          </Group>
          <Group $pad={3}>
            <Tools>
              <Tool icon="undoAll" w={36} a="Undo" b="All" off />
              <Tool icon="undoRows" w={32} a="Selected" b="Rows" off />
            </Tools>
            <GroupName>Undo</GroupName>
          </Group>
          <Group $pad={6}>
            <Tools>
              <Tool icon="edit" w={36} a="Edit" drop />
              <Tool icon="create" w={26} a="Create" drop />
              <Tool icon="remove" w={34} a="Delete" drop />
              <Tool icon="setManager" w={32} a="Set" b="Manager" />
              <Tool icon="removeManager" w={40} a="Remove" b="Manager" off />
              <Tool icon="password" w={42} a="Reset" b="Password" drop />
              <Tool icon="editMfa" w={32} a="Edit" b="MFA" drop off />
              <Tool icon="revoke" w={30} a="Revoke" b="access" />
              <Tool icon="createUsers" w={32} a="Create" b="Users" drop />
              <Tool icon="updateUsers" w={26} a="Update" b="Users" drop />
            </Tools>
            <GroupName>Edit</GroupName>
          </Group>
          <Group $lead={3} $pad={3}>
            <Tools>
              <HotSpot>
                <Tool icon="group" w={62} a="Group" b="Membership..." drop hot />
                <Highlight />
                <Tooltip role="tooltip">
                  <TipTitle>Show Group Membership</TipTitle>
                  Show all group memberships for all selected users.
                  <br />
                  Add or remove memberships for any number of users and groups in this view.
                </Tooltip>
              </HotSpot>
              <Tool icon="licenses" w={42} a="Licenses..." drop />
              <Tool icon="onedrive" w={36} a="OneDrive" b="Files..." drop off />
              <Tool icon="mailPerm" w={64} a="Mailbox" b="Permissions..." drop off />
              <Tool icon="messages" w={42} a="Messages..." drop off />
              <Tool icon="events" w={36} a="Events..." drop off />
              <Tool icon="rules" w={36} a="Message" b="Rules..." drop off />
              <Tool icon="contacts" w={42} a="Contacts..." drop off />
              <Tool icon="chats" w={38} a="Show" b="Chats..." drop />
            </Tools>
            <GroupName>User Management</GroupName>
          </Group>
        </Ribbon>
      </Head>
      <Zone>
        <ZoneText>Drag a column header to this grouping zone to categorize your grid data</ZoneText>
        <button aria-label="Delete view">
          <Draw w={12} h={14}>
            <path d="M0.500 2.500h11M4 2V1h4v1" stroke={BLUE} strokeWidth="1.300" />
            <path d="M2 4.500h8v8H2zM4.700 5v7M7.300 5v7" stroke={DARK} strokeWidth="1.300" />
          </Draw>
        </button>
        <ViewPicker>
          <Draw w={10} h={12}>
            <path d="M1.500 11V5.500c0-5.500 7-5.500 7 0V11z" fill="#fff" stroke="#555" />
            <path d="M2 6c0-5.500 6-5.500 6 0z" fill="#333" />
            <path d="M1 11h8" stroke="#444" />
          </Draw>
          <Select aria-label="Grid view" defaultValue="work">
            <option value="work">Work and contact info</option>
          </Select>
          <PickerCaret />
        </ViewPicker>
      </Zone>
      <Body>
        <Rail>
          <RailButton aria-label="Open settings panel"><Gear /><Chevron /></RailButton>
        </Rail>
        <GridArea>
          <Table>
            <colgroup>
              {widths.map((w, i) => <col key={i} width={w} />)}
              <col />
            </colgroup>
            <thead>
              <tr>
                <Band colSpan={3}>System</Band>
                <Band colSpan={16} $main>User Info</Band>
              </tr>
              <tr>
                <HeadCell $tight aria-label="Session"><LockInner><Lock /></LockInner></HeadCell>
                <HeadCell $tight aria-label="Object type"><LockInner><Lock /></LockInner></HeadCell>
                <HeadCell $tight><LockInner><Lock />:</LockInner></HeadCell>
                <HeadCell $wide>
                  <HeadInner>
                    User Display Name
                    <Draw w={6} h={4}><path d="M0 4l3-3.500L6 4z" fill="#aaa" /></Draw>
                  </HeadInner>
                </HeadCell>
                <HeadCell $wide>Username</HeadCell>
                <HeadCell $on>
                  <HeadInner>
                    User Type
                    <Draw w={10} h={6}>
                      <path d="M0.500 2.500L4 0.500L9.500 1L6.500 3.500v2L4.500 5z" fill="#d8d8d8" />
                      <path d="M2 2.500h5M4 4h2" stroke="#444" strokeWidth="0.800" />
                    </Draw>
                  </HeadInner>
                </HeadCell>
                {headings.map((h) => <HeadCell key={h}>{h}</HeadCell>)}
              </tr>
            </thead>
            <tbody>
              {users.map((u) => <UserRow key={u.name} u={u} />)}
            </tbody>
          </Table>
        </GridArea>
        <Rail>
          <RailButton aria-label="Open details panel"><Chevron left /><Clipboard /></RailButton>
        </Rail>
        <Gutter><GutterGrip /></Gutter>
      </Body>
    </Window>
  );
}
